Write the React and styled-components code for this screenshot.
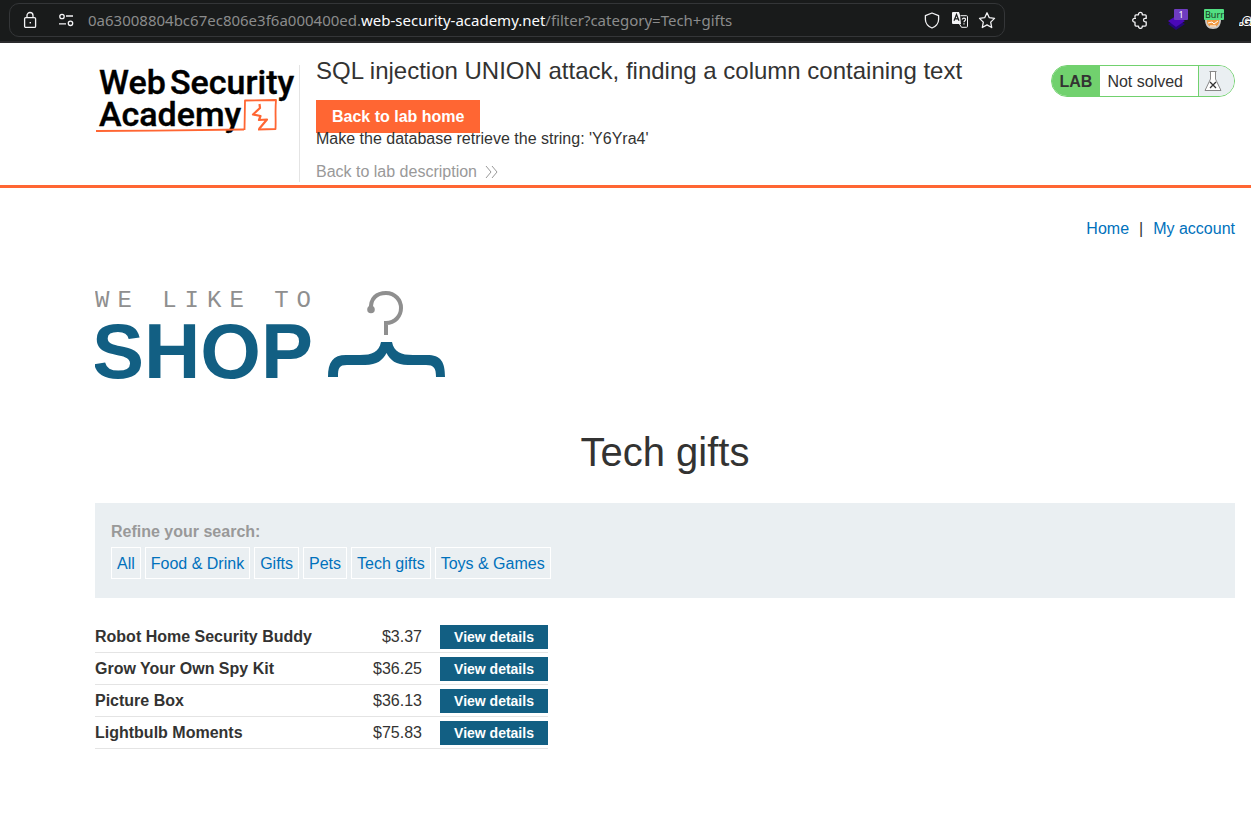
import React from "react";
import styled, { createGlobalStyle } from "styled-components";

const GlobalStyle = createGlobalStyle`
  *, *::before, *::after { box-sizing: border-box; }
  body {
    margin: 0;
    background: #fff;
    color: #333332;
    font: 16px/20px "Liberation Sans", Arial, sans-serif;
  }
  h1, h2, p { margin: 0; font-weight: 400; }
`;

const BrowserBar = styled.header`
  display: flex;
  align-items: center;
  justify-content: space-between;
  height: 43px;
  padding: 0 0 1px 9px;
  background: #191b1b;
  border-bottom: 2px solid #2b2b2d;
  overflow: hidden;
`;

const AddressBox = styled.div`
  display: flex;
  align-items: center;
  flex: 0 1 996px;
  min-width: 0;
  height: 34px;
  padding: 0 8px 0 12px;
  border: 1px solid #343638;
  border-radius: 10px;
`;

const IconButton = styled.button`
  display: flex;
  flex: none;
  padding: 0;
  border: 0;
  background: none;
  color: #f4f4f6;
  cursor: pointer;
`;

const SiteIcons = styled.div`
  display: flex;
  flex: none;
  gap: 20px;
  margin-right: 14px;
`;

const PageActions = styled.div`
  display: flex;
  flex: none;
  gap: 10px;
`;

const Url = styled.div`
  flex: 1;
  min-width: 0;
  overflow: hidden;
  white-space: nowrap;
  font: 15px/20px "Noto Sans", sans-serif;
  color: #8b8c8c;
`;

const Domain = styled.span`
  color: #fbfbfe;
`;

const Extensions = styled.div`
  display: flex;
  flex: none;
  align-items: center;
  gap: 15px;
`;

const LabHeader = styled.section`
  display: flex;
  align-items: flex-start;
  padding: 12px 16px 3px 95px;
  border-bottom: 3px solid #ff6633;
`;

const LogoLink = styled.a`
  display: block;
  flex: none;
  width: 205px;
  height: 117px;
  margin-top: 10px;
  border-right: 1px solid #e4e4e4;
`;

const LabInfo = styled.div`
  flex: 1;
  min-width: 0;
  padding-left: 16px;
`;

const LabTitle = styled.h2`
  font-size: 24px;
  line-height: 32px;
`;

const LabHomeLink = styled.a`
  display: block;
  width: fit-content;
  margin-top: 13px;
  padding: 7px 16px 6px;
  background: #ff6633;
  color: #fff;
  font-weight: 700;
  text-decoration: none;
`;

const LabHint = styled.p`
  margin-top: -4px;
`;

const DescriptionLink = styled.a`
  display: flex;
  align-items: center;
  gap: 8px;
  width: fit-content;
  margin-top: 13px;
  color: #999;
  text-decoration: none;
`;

const LabStatus = styled.div`
  display: flex;
  flex: none;
  height: 32px;
  margin-top: 10px;
  border: 1px solid #71d16e;
  border-radius: 16px;
  overflow: hidden;
  line-height: 32px;
`;

const StatusTag = styled.strong`
  padding: 0 8px;
  background: #71d16e;
`;

const StatusText = styled.span`
  padding: 0 15px 0 7px;
`;

const StatusFlask = styled.span`
  display: flex;
  width: 36px;
  padding: 4px 5px;
  background: #eaeff2;
  border-left: 1px solid #71d16e;
`;

const Content = styled.main`
  padding: 31px 16px 60px 95px;
`;

const TopNav = styled.nav`
  display: flex;
  justify-content: flex-end;
  gap: 10px;
`;

const TextLink = styled.a`
  color: #0071bc;
  text-decoration: none;
`;

const ShopLogo = styled.svg`
  display: block;
  margin-top: 50px;
`;

const PageTitle = styled.h1`
  margin-top: 47px;
  font-size: 40px;
  line-height: 48px;
  text-align: center;
`;

const Filters = styled.section`
  margin-top: 27px;
  padding: 19px 16px;
  background: #eaeff2;
`;

const FilterLabel = styled.div`
  color: #999;
  font-weight: 700;
`;

const FilterList = styled.div`
  display: flex;
  flex-wrap: wrap;
  gap: 4px;
  margin-top: 5px;
`;

const FilterLink = styled(TextLink)`
  padding: 6px 5px 4px;
  border: 1px solid #fff;
`;

const Products = styled.table`
  width: 453px;
  max-width: 100%;
  margin-top: 23px;
  border-collapse: collapse;
`;

const NameCell = styled.th`
  padding: 0;
  border-bottom: 1px solid #e4e4e4;
  text-align: left;
`;

const PriceCell = styled.td`
  padding: 0 18px 0 0;
  border-bottom: 1px solid #e4e4e4;
  text-align: right;
`;

const ActionCell = styled.td`
  width: 108px;
  padding: 4px 0 3px;
  border-bottom: 1px solid #e4e4e4;
`;

const DetailsLink = styled.a`
  display: block;
  background: #125f83;
  color: #fff;
  font-size: 14px;
  font-weight: 700;
  line-height: 24px;
  text-align: center;
  text-decoration: none;
`;

const categories = ["All", "Food & Drink", "Gifts", "Pets", "Tech gifts", "Toys & Games"];

const products = [
  { name: "Robot Home Security Buddy", price: "$3.37" },
  { name: "Grow Your Own Spy Kit", price: "$36.25" },
  { name: "Picture Box", price: "$36.13" },
  { name: "Lightbulb Moments", price: "$75.83" },
];

const stroke = { fill: "none", stroke: "currentColor", strokeWidth: 1.3 };

const LockIcon = () => (
  <svg width="16" height="18" viewBox="0 0 16 18" {...stroke}>
    <rect x="2.6" y="6.6" width="11" height="9.8" rx="1.2" />
    <path d="M5 6.5V4.5a3 3 0 0 1 6 0v2" />
    <rect x="7.6" y="11" width="1.4" height="1.4" fill="currentColor" stroke="none" />
  </svg>
);

const PermissionsIcon = () => (
  <svg width="16" height="18" viewBox="0 0 16 18" {...stroke}>
    <circle cx="4" cy="5.5" r="2.2" />
    <path d="M8 5h7M1 12.8h7" />
    <circle cx="12.5" cy="12.3" r="2.2" />
  </svg>
);

const ShieldIcon = () => (
  <svg width="18" height="18" viewBox="0 0 18 18" {...stroke} strokeLinejoin="round">
    <path d="M8 2 14.6 4.6V8.5C14.6 12.5 11.5 15.8 8 17 4.5 15.8 1.4 12.5 1.4 8.5V4.6Z" />
  </svg>
);

const TranslateIcon = () => (
  <svg width="16" height="18" viewBox="0 0 16 18">
    <path d="M1 1h6l1 3 1 9H1a1 1 0 0 1-1-1V2a1 1 0 0 1 1-1Z" fill="#f4f4f6" />
    <path d="M2 9.8 4.5 3.5 7 9.8M3 7.8h3.2" fill="none" stroke="#191b1b" strokeWidth="1.2" />
    <path d="M8.5 4.7h6a1 1 0 0 1 1 1v9.600a1 1 0 0 1-1 1H9.500L7.500 13" fill="none" stroke="#f4f4f6" />
    <path d="M10.300 8.500c0-2 3.500-1.800 3.200.2-.2 1-1.500 1.200-1.500 2.500m0 1v1.300" fill="none" stroke="#f4f4f6" strokeWidth="1.2" />
  </svg>
);

const StarIcon = () => (
  <svg width="18" height="18" viewBox="0 0 18 18" {...stroke} strokeLinejoin="round">
    <path d="m9 1.800 2.300 4.900 5.200.7-3.800 3.700 1 5.400L9 13.900l-4.700 2.600 1-5.400L1.500 7.400l5.200-.7Z" />
  </svg>
);

const PuzzleIcon = () => (
  <svg width="20" height="18" viewBox="0 0 20 18" {...stroke} strokeLinejoin="round">
    <path d="M3 6.500V4.800a1 1 0 0 1 1-1h2.500V3.200a1.900 1.900 0 0 1 3.800 0v.6h2.900a1 1 0 0 1 1 1v2.600h-1a1.700 1.700 0 0 0 0 3.400h1v3.300a1 1 0 0 1-1 1h-2.900v.4a1.900 1.900 0 0 1-3.800 0v-.4H4a1 1 0 0 1-1-1v-2.900h-.4a1.900 1.900 0 0 1 0-3.800H4" />
  </svg>
);

const LayersIcon = () => (
  <svg width="22" height="24" viewBox="0 0 22 24">
    <path d="m1 16 8-5 9 5-9 6Z" fill="#24067a" />
    <path d="m1 13 8-5 9 5-9 6Z" fill="#4a08b8" />
    <rect x="7" y="1" width="14" height="11" rx="1" fill="#6e3cc0" />
    <text x="14" y="10" textAnchor="middle" fontFamily="Noto Sans" fontSize="9" fill="#fff">1</text>
  </svg>
);

const BurpIcon = () => (
  <svg width="20" height="24" viewBox="0 0 20 24">
    <path d="M1 11h16c0 7-3 10-8 10s-8-3-8-10Z" fill="#ccc8c4" />
    <path d="M3 11h12c1 5-2 8-6 8s-7-3-6-8Z" fill="#f29a42" />
    <path d="m4 15 4-1 2 2 4-3M6 18h6" fill="none" stroke="#fff" />
    <rect y="1" width="20" height="11" rx="1" fill="#52df82" />
    <text x="1" y="10" fontFamily="Noto Sans" fontSize="9" fill="#173c22">Burr</text>
  </svg>
);

const GitIcon = () => (
  <svg width="12" height="24" viewBox="0 0 12 24">
    <text x="1" y="17" fontFamily="Liberation Sans" fontSize="10" fontWeight="700" fontStyle="italic" fill="#222" stroke="#fff" strokeWidth="2" paintOrder="stroke">.GI</text>
  </svg>
);

const AcademyLogo = () => (
  <svg width="204" height="80" viewBox="0 0 204 80" role="img" aria-label="Web Security Academy">
    <g fontFamily="Roboto" fontSize="34" fontWeight="500" fill="#000" stroke="#000" strokeWidth="0.4">
      <text x="4" y="29">Web</text>
      <text x="75" y="29">Security</text>
      <text x="4" y="61">Academy</text>
    </g>
    <path d="M1 66 60 65.600 149 64.500" fill="none" stroke="#ff6633" strokeWidth="1.800" />
    <path d="M149.500 65 150 35.500 181 35C180 45 181 55 180.500 64L163 64.500" fill="none" stroke="#ff6633" strokeWidth="1.800" strokeLinejoin="round" />
    <path d="M164.500 39 165 43 158 49.500 165.500 51 164 55 172 54.500 164 64" fill="none" stroke="#ff6633" strokeWidth="2.200" strokeLinejoin="round" />
  </svg>
);

const FlaskIcon = () => (
  <svg width="18" height="22" viewBox="0 0 18 22" fill="none">
    <path d="M6.500 2V9L1 20.500H17L11.500 9V2" fill="#fff" stroke="#888" />
    <path d="M5.500 1.500h7" stroke="#888" />
    <path d="m6 12 6 6m0-6-6 6" stroke="#333" strokeWidth="1.3" />
  </svg>
);

export default function App() {
  return (
    <>
      <GlobalStyle />
      <BrowserBar>
        <AddressBox>
          <SiteIcons>
            <IconButton aria-label="Connection"><LockIcon /></IconButton>
            <IconButton aria-label="Permissions"><PermissionsIcon /></IconButton>
          </SiteIcons>
          <Url>
            0a63008804bc67ec806e3f6a000400ed.<Domain>web-security-academy.net</Domain>/filter?category=Tech+gifts
          </Url>
          <PageActions>
            <IconButton aria-label="Protection"><ShieldIcon /></IconButton>
            <IconButton aria-label="Translate"><TranslateIcon /></IconButton>
            <IconButton aria-label="Bookmark"><StarIcon /></IconButton>
          </PageActions>
        </AddressBox>
        <Extensions>
          <IconButton aria-label="Extensions"><PuzzleIcon /></IconButton>
          <IconButton aria-label="Layers"><LayersIcon /></IconButton>
          <IconButton aria-label="Proxy"><BurpIcon /></IconButton>
          <IconButton aria-label="Git"><GitIcon /></IconButton>
        </Extensions>
      </BrowserBar>

      <LabHeader>
        <LogoLink href="#academy"><AcademyLogo /></LogoLink>
        <LabInfo>
          <LabTitle>SQL injection UNION attack, finding a column containing text</LabTitle>
          <LabHomeLink href="#lab">Back to lab home</LabHomeLink>
          <LabHint>Make the database retrieve the string: 'Y6Yra4'</LabHint>
          <DescriptionLink href="#description">
            Back to lab description
            <svg width="14" height="14" viewBox="0 0 14 14" fill="none" stroke="#999">
              <path d="m1 1 5 6-5 6M7 1l5 6-5 6" />
            </svg>
          </DescriptionLink>
        </LabInfo>
        <LabStatus>
          <StatusTag>LAB</StatusTag>
          <StatusText>Not solved</StatusText>
          <StatusFlask><FlaskIcon /></StatusFlask>
        </LabStatus>
      </LabHeader>

      <Content>
        <TopNav>
          <TextLink href="#home">Home</TextLink>
          <span>|</span>
          <TextLink href="#account">My account</TextLink>
        </TopNav>

        <ShopLogo width="352" height="92" viewBox="0 0 352 92" role="img" aria-label="We like to shop">
          <text x="0" y="18" fontFamily="Liberation Mono" fontSize="24" letterSpacing="8" fill="#8f8f8f">WE LIKE TO</text>
          <text x="-3" y="89" fontFamily="Liberation Sans" fontSize="78" fontWeight="700" fill="#125f83">SHOP</text>
          <g fill="none" stroke="#8f8f8f" strokeWidth="4">
            <path d="M276 21C275 9 282 4 291 4c9 0 15 7 15 15s-6 15-15 15v12" />
            <circle cx="276" cy="20.500" r="1.800" />
          </g>
          <path d="M286 53H297C299 63 306 66 318 66H332C346 66 350 73 350 88H341C341 79 339 76 331 76H313C301 76 295 71 291.500 64 288 71 282 76 270 76H252C244 76 243 79 243 88H233C233 73 238 66 251 66H265C277 66 284 63 286 53Z" fill="#125f83" />
        </ShopLogo>

        <PageTitle>Tech gifts</PageTitle>

        <Filters>
          <FilterLabel>Refine your search:</FilterLabel>
          <FilterList>
            {categories.map((c) => (
              <FilterLink key={c} href={"#" + encodeURIComponent(c)}>{c}</FilterLink>
            ))}
          </FilterList>
        </Filters>

        <Products>
          <tbody>
            {products.map((p) => (
              <tr key={p.name}>
                <NameCell scope="row">{p.name}</NameCell>
                <PriceCell>{p.price}</PriceCell>
                <ActionCell><DetailsLink href="#product">View details</DetailsLink></ActionCell>
              </tr>
            ))}
          </tbody>
        </Products>
      </Content>
    </>
  );
}
